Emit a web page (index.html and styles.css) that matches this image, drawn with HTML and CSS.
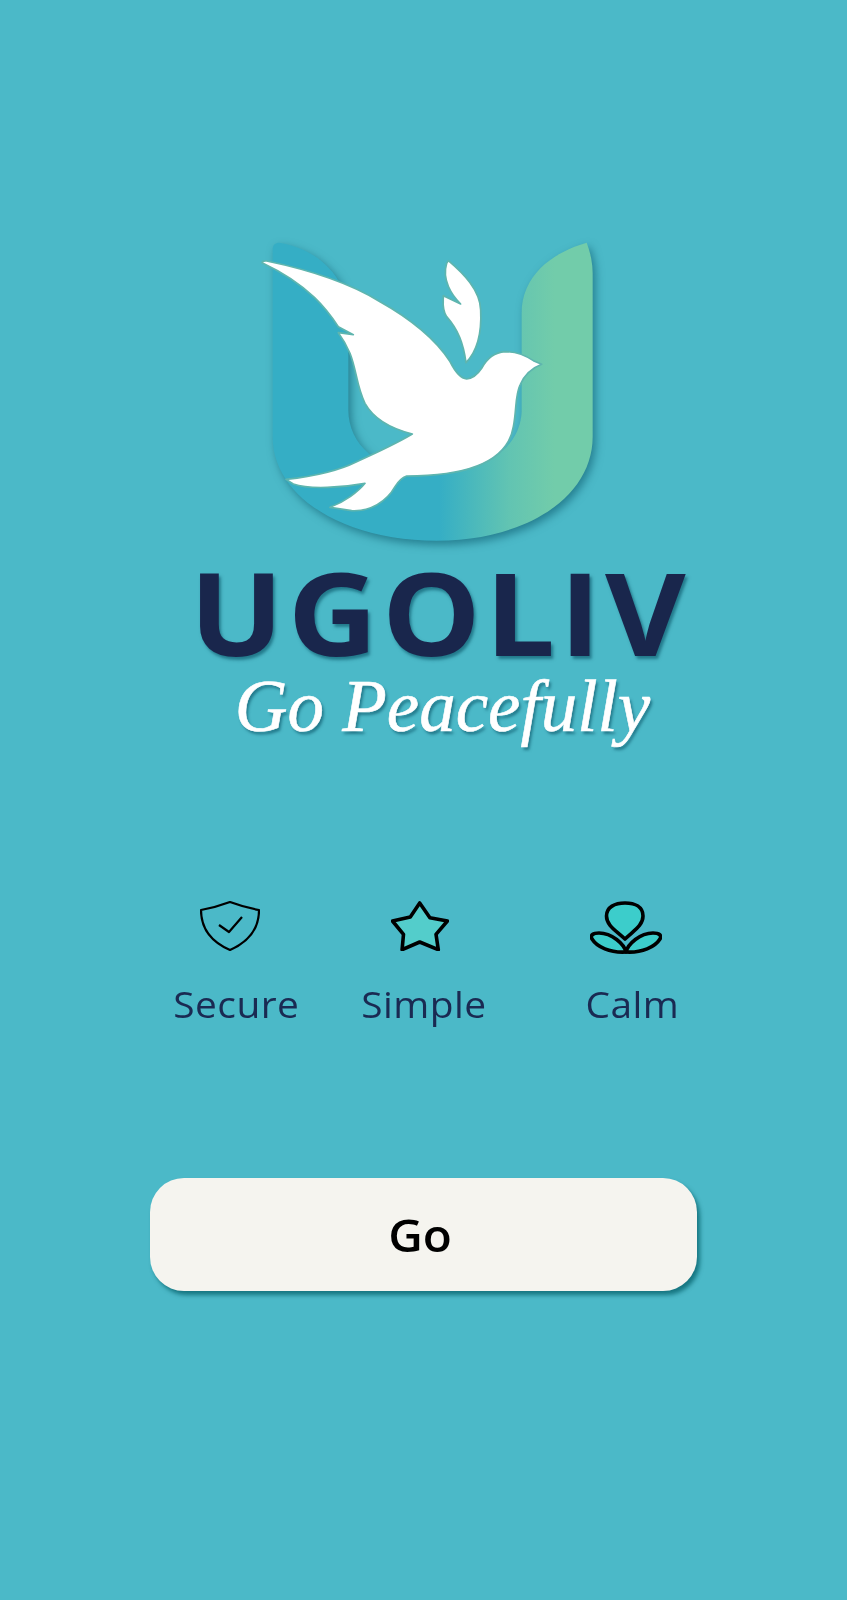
FILE: index.html
```html
<!DOCTYPE html>
<html lang="en">
<head>
  <meta charset="UTF-8">
  <meta name="viewport" content="width=device-width, initial-scale=1.0">
  <title>Ugoliv</title>
  <link rel="stylesheet" href="styles.css">
</head>
<body>
  <div class="screen">
    <svg class="logo" viewBox="0 0 1080 960" aria-hidden="true">
      <defs>
        <linearGradient id="uGrad" x1="0" y1="0" x2="1" y2="0">
          <stop offset="0" stop-color="#35aec5"/>
          <stop offset="0.52" stop-color="#35aec5"/>
          <stop offset="0.74" stop-color="#62c4b2"/>
          <stop offset="0.88" stop-color="#72ccaa"/>
          <stop offset="1" stop-color="#72ccaa"/>
        </linearGradient>
      </defs>
      <path class="logo-u" fill="url(#uGrad)" d="M88 38 C200 55 295 140 295 260 L295 540 C295 640 380 730 550 730 C720 730 815 640 815 540 L815 250 C815 140 900 70 1010 38 C1022 70 1028 100 1028 130 L1028 620 C1028 800 830 932 560 932 C280 932 68 800 68 620 L68 60 C68 45 75 38 88 38 Z"/>
      <path class="logo-bird" d="M36 98 Q38 92 50 93 C180 120 300 160 390 215 C480 265 560 330 600 395 Q625 445 650 447 Q675 445 695 415 Q720 368 765 365 Q810 365 850 392 L875 403 Q830 420 810 465 C795 495 800 540 790 590 C775 680 680 738 470 738 Q450 745 435 770 C410 815 360 845 305 842 L240 832 C285 815 325 785 345 760 C280 772 180 780 130 762 L108 748 C200 738 270 720 320 695 C380 668 440 640 487 612 C420 595 370 565 345 520 C320 470 320 420 300 370 Q285 335 265 308 L310 314 L265 290 C235 245 180 165 36 98 Z"/>
      <path class="logo-bird" d="M595 92 C640 130 690 180 692 240 C695 300 685 360 648 398 C640 340 625 300 590 260 C575 240 580 215 580 197 L632 222 C605 195 575 150 590 100 Z"/>
    </svg>

    <h1 class="brand"><span class="brand-text">UGOLIV</span></h1>
    <p class="tagline">Go Peacefully</p>

    <div class="features">
      <div class="feature">
        <svg class="feature-icon" width="60" height="50" viewBox="0 0 60 50" aria-hidden="true">
          <path class="line-thin" d="M30 1 C38 4 48 7 59 9 C59 30 46 42 30 49 C14 42 1 30 1 9 C12 7 22 4 30 1 Z"/>
          <path class="line-thin" d="M19 24 L29 31 L42 16"/>
        </svg>
        <span class="feature-label">Secure</span>
      </div>
      <div class="feature">
        <svg class="feature-icon star-icon" width="58" height="50" viewBox="0 0 58 50" aria-hidden="true">
          <path class="line-bold star-fill" d="M28.7 2 L38.9 16.7 L56.4 20 L45 33.3 L47.3 48.7 L28.7 41 L11.1 48.7 L12.5 33.3 L1.5 20 L19.3 16 Z"/>
        </svg>
        <span class="feature-label">Simple</span>
      </div>
      <div class="feature">
        <svg class="feature-icon" width="72" height="53" viewBox="0 0 72 53" aria-hidden="true">
          <path class="line-bold lotus-fill" d="M36 51 C34 43 22 32 9 32 C3 32 0 34 2 38 C7 46 20 52 36 51 Z"/>
          <path class="line-bold lotus-fill" d="M36 51 C38 43 50 32 63 32 C69 32 72 34 70 38 C65 46 52 52 36 51 Z"/>
          <path class="line-bold lotus-fill" d="M35 38 C27 30 16.5 25 16.5 15 C16.5 6 25 2 35 2 C45 2 53 6 53 15 C53 25 43 30 35 38 Z"/>
        </svg>
        <span class="feature-label">Calm</span>
      </div>
    </div>

    <button class="go-btn" type="button"><span class="go-text">Go</span></button>
  </div>
</body>
</html>
```

FILE: styles.css
```css
body {
  margin: 0;
  background-color: #4bb9c8;
  font-family: "Open Sans", "Noto Sans", sans-serif;
}

.screen {
  height: 1600px;
  padding-top: 230px;
  box-sizing: border-box;
  display: flex;
  flex-direction: column;
  overflow: hidden;
}

.logo {
  display: block;
  width: 360px;
  height: 320px;
  margin-left: 250px;
  overflow: visible;
}

.logo-u {
  filter: drop-shadow(9px 12px 12px rgba(0, 70, 90, 0.5));
}

.logo-bird {
  fill: #fff;
  stroke: #5fb5ae;
  stroke-width: 5;
  stroke-linejoin: round;
}

.brand {
  margin: 12px 0 0;
  padding-left: 32px;
  font-size: 115px;
  line-height: 100px;
  font-weight: 700;
  letter-spacing: 4px;
  text-align: center;
  color: #19264c;
  text-shadow: 2px 3px 3px rgba(0, 70, 90, 0.55);
}

/* the type in the mock is a bit wider than Open Sans */
.brand-text {
  display: inline-block;
  transform: scaleX(1.08);
}

.tagline {
  margin: 3px 0 0;
  padding-left: 38px;
  font-family: "Liberation Serif", serif;
  font-style: italic;
  font-size: 73px;
  line-height: 84px;
  text-align: center;
  color: #fff;
  -webkit-text-stroke: 0.6px #fff;
  text-shadow: 2px 3px 3px rgba(0, 70, 90, 0.55);
}

.features {
  display: grid;
  grid-template-columns: 188px 188px 228px;
  margin-top: 152px;
  margin-left: 142px;
}

.feature {
  height: 128px;
  display: flex;
  flex-direction: column;
  align-items: center;
}

.feature-icon {
  display: block;
  margin-right: 12px;
}

.star-icon {
  margin-right: 8px;
}

.feature-label {
  display: inline-block;
  margin-top: auto;
  font-size: 36px;
  line-height: 48px;
  letter-spacing: 0.4px;
  color: #1a2a52;
  transform: scaleX(1.08);
}

.line-thin {
  fill: none;
  stroke: #000;
  stroke-width: 2.2;
  stroke-linejoin: round;
}

.line-bold {
  stroke: #000;
  stroke-width: 3.6;
  stroke-linejoin: round;
}

.star-fill {
  fill: #53cdcb;
}

.lotus-fill {
  fill: #3ccdcb;
}

.go-btn {
  display: block;
  width: 547px;
  height: 113px;
  margin: 149px 0 0 150px;
  padding: 0 7px 0 0;
  border: none;
  border-radius: 34px;
  background-color: #f5f4ef;
  box-shadow: 3px 4px 4px rgba(0, 90, 100, 0.7);
  font-family: inherit;
  font-size: 45px;
  font-weight: 600;
  color: #000;
}

.go-text {
  display: inline-block;
  transform: scaleX(1.06);
}
```
